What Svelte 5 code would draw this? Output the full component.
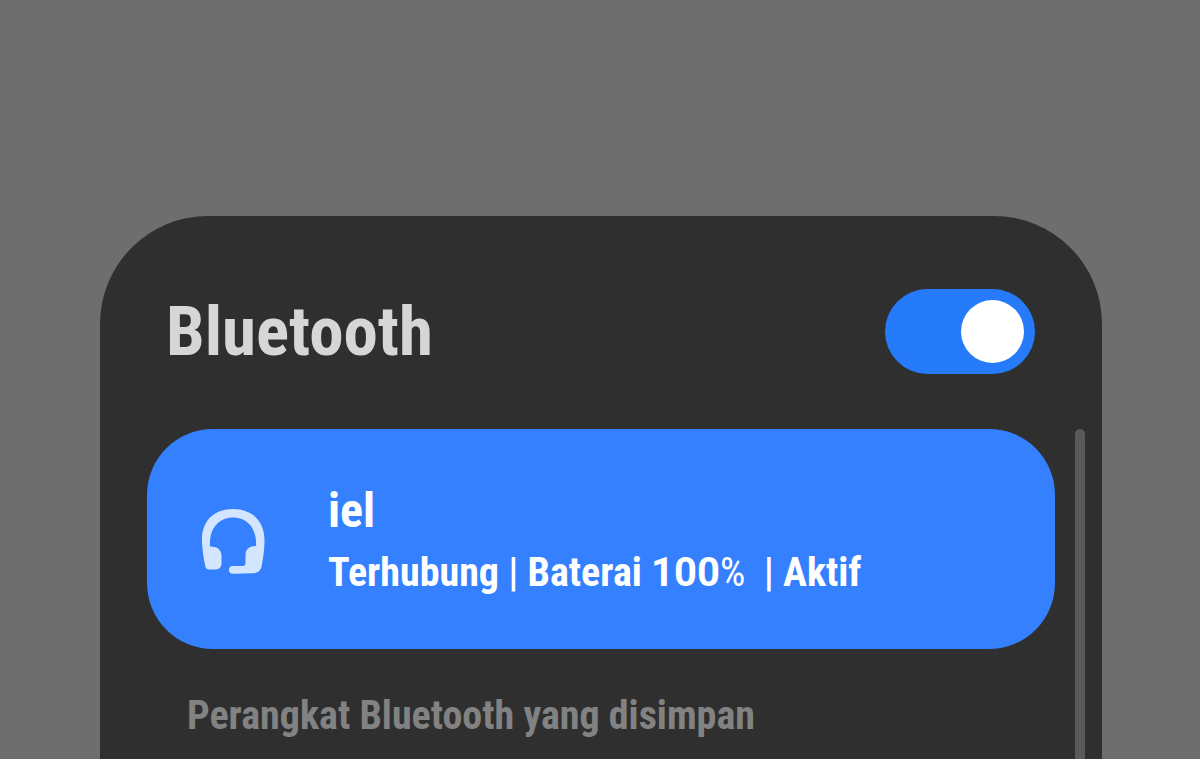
<script>
  let enabled = $state(true)

  const device = {
    name: 'iel',
    status: 'Terhubung',
    battery: 100,
    active: 'Aktif'
  }
</script>

<svelte:head>
  <title>Bluetooth</title>
</svelte:head>

<div class="screen">
  <main class="sheet">
    <header>
      <h1><label for="bluetooth">Bluetooth</label></h1>
      <input id="bluetooth" type="checkbox" role="switch" bind:checked={enabled}>
    </header>

    <div class="body">
      <section class="list">
        <button class="device" type="button">
          <svg viewBox="0 -2 70 70" aria-hidden="true">
            <path d="M4 36C3 15 16 3 35 3s32 12 31.500 33c-.2 9-1.500 17-3 24.500-1 5-4.500 6.500-9 6.800l-19.500.5c-5.500 0-5.500-7.800 0-7.800h9.500c2 0 3-1 3-3V49c0-6 4-9 10.500-9C59 22 49 11.500 35 11.500S11 22 12 40.500c7 0 11.500 3 11.500 9.500v7c0 4.500-2.500 6.500-6.500 6.500h-6c-2.500 0-3.300-1.500-3.700-3.500C5.500 52 4.500 45 4 36z" />
          </svg>
          <span class="info">
            <span class="name">{device.name}</span>
            <span class="status">{device.status} | Baterai <span class="level">{device.battery}</span><span class="unit">%</span>&nbsp; | {device.active}</span>
          </span>
        </button>

        <h2>Perangkat Bluetooth yang disimpan</h2>
      </section>

      <div class="scrollbar"></div>
    </div>
  </main>
</div>

<style>
  :global(body) {
    background: #6e6e6e;
  }

  .screen {
    box-sizing: border-box;
    display: flex;
    height: 100vh;
    padding: 216px 98px 0 100px;
    overflow: hidden;
    font-family: "Roboto Condensed", Roboto, sans-serif;
    font-weight: 700;
  }

  .sheet {
    display: flex;
    flex: 1;
    flex-direction: column;
    border-radius: 108px 108px 0 0;
    background: #2f2f2f;
  }

  header {
    display: flex;
    align-items: center;
    justify-content: space-between;
    padding: 73px 67px 55px 66px;
  }

  h1 {
    margin: 0;
    color: #d6d6d6;
    font-size: 69px;
    line-height: 84px;
  }

  input {
    appearance: none;
    box-sizing: border-box;
    display: flex;
    width: 150px;
    height: 85px;
    margin: 0;
    padding: 11px;
    border-radius: 43px;
    background: #555;
    cursor: pointer;
  }

  input::before {
    content: "";
    width: 63px;
    border-radius: 50%;
    background: #fff;
  }

  input:checked {
    justify-content: flex-end;
    background: #267bfa;
  }

  .body {
    display: flex;
    flex: 1;
    gap: 20px;
    padding: 0 17px 0 47px;
  }

  .list {
    flex: 1;
  }

  .device {
    display: flex;
    align-items: center;
    gap: 60px;
    width: 100%;
    padding: 52px 51px;
    border: 0;
    border-radius: 66px;
    background: #3480ff;
    color: #fff;
    font: inherit;
    text-align: left;
    cursor: pointer;
  }

  svg {
    width: 70px;
    height: 70px;
    fill: #d4e6ff;
  }

  .info {
    display: flex;
    flex-direction: column;
    gap: 8px;
  }

  .name {
    font-size: 48px;
    line-height: 60px;
  }

  .status {
    font-size: 40px;
    line-height: 48px;
  }

  .level {
    font-family: Roboto, sans-serif;
  }

  .unit {
    font-weight: 400;
  }

  h2 {
    margin: 43px 40px 0;
    color: #828282;
    font-size: 40px;
    line-height: 48px;
  }

  .scrollbar {
    width: 10px;
    border-radius: 5px 5px 0 0;
    background: #5a5a5a;
  }
</style>
